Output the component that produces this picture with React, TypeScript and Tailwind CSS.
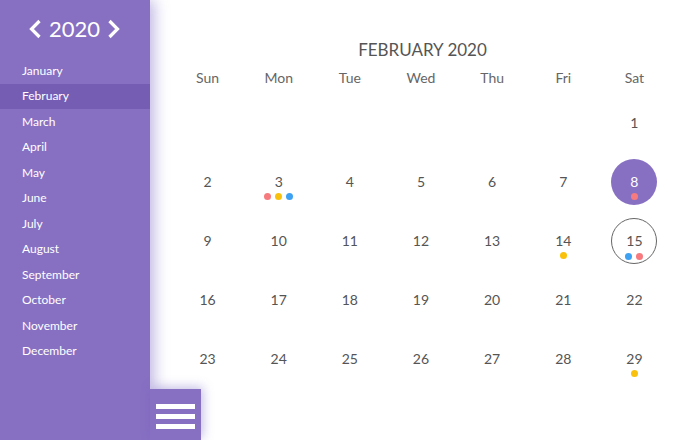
import React from "react";

const months = ["January","February","March","April","May","June","July","August","September","October","November","December"];
const days = ["Sun","Mon","Tue","Wed","Thu","Fri","Sat"];
const R = "bg-[#f67a7e]";
const Y = "bg-[#f9c10c]";
const B = "bg-[#3ea1f2]";
const dots: Record<number, string[]> = { 3: [R, Y, B], 8: [R], 14: [Y], 15: [B, R], 29: [Y] };

export default function App() {
  const cells: (number | null)[] = [null, null, null, null, null, null];
  for (let i = 1; i <= 29; i++) cells.push(i);
  while (cells.length % 7) cells.push(null);
  return (
    <div className="relative w-[692px] h-[440px] overflow-hidden bg-white flex" style={{ fontFamily: "Lato, 'Noto Sans', sans-serif" }}>
      <div className="relative z-10 w-[150px] h-full bg-[#8770c2] shadow-[4px_0_14px_rgba(110,90,190,0.45)] flex flex-col text-white">
        <div className="flex items-center justify-center gap-[7px] h-[58px] pr-[1px]">
          <svg width="14" height="20" viewBox="0 0 14 20"><path d="M11.5 2 L3.5 10 L11.5 18" fill="none" stroke="white" strokeWidth="3.2" /></svg>
          <span className="text-[22px] leading-none">2020</span>
          <svg width="14" height="20" viewBox="0 0 14 20"><path d="M2.5 2 L10.5 10 L2.5 18" fill="none" stroke="white" strokeWidth="3.2" /></svg>
        </div>
        <div className="flex flex-col">
          {months.map((m) => (
            <div key={m} className={`h-[25.5px] flex items-center pl-[22px] text-[12px] ${m === "February" ? "bg-[#765db4]" : ""}`}>{m}</div>
          ))}
        </div>
      </div>
      <div className="absolute left-[150px] top-[389px] z-10 w-[51px] h-[51px] bg-[#8770c2] shadow-[2px_-2px_10px_rgba(110,90,190,0.4)] flex flex-col items-center justify-center gap-[5px] pt-[3px]">
        <div className="w-[39px] h-[5px] bg-white" />
        <div className="w-[39px] h-[5px] bg-white" />
        <div className="w-[39px] h-[5px] bg-white" />
      </div>
      <div className="flex-1 px-[22px] pt-[39px] text-[#555]">
        <div className="text-center text-[17px] leading-[22px] text-[#555] pl-[3px]">FEBRUARY 2020</div>
        <div className="grid grid-cols-7 mt-[7px]">
          {days.map((d) => (
            <div key={d} className="text-center text-[14px] leading-[20px] text-[#666]">{d}</div>
          ))}
        </div>
        <div className="grid grid-cols-7 mt-[5px]">
          {cells.map((n, i) => (
            <div key={i} className="h-[59px] flex items-center justify-center">
              {n !== null && (
                <div className={`relative w-[46px] h-[46px] rounded-full flex items-center justify-center ${n === 8 ? "bg-[#8770c2] text-white" : ""} ${n === 15 ? "border border-[#666]" : ""}`}>
                  <span className="text-[14px] leading-none">{n}</span>
                  {dots[n] && (
                    <div className="absolute left-0 right-0 top-[34px] flex justify-center gap-[4px]">
                      {dots[n].map((c, j) => (
                        <div key={j} className={`w-[7px] h-[7px] rounded-full ${c}`} />
                      ))}
                    </div>
                  )}
                </div>
              )}
            </div>
          ))}
        </div>
      </div>
    </div>
  );
}
